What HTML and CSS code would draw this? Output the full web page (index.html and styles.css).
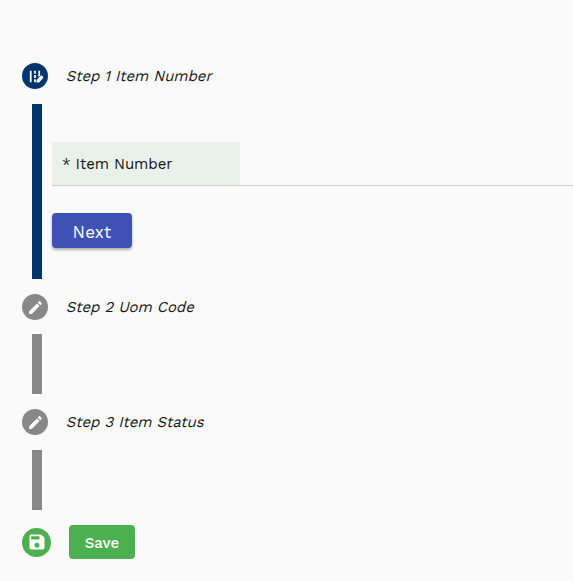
FILE: index.html
```html
<!DOCTYPE html>
<html lang="en">
<head>
<meta charset="utf-8">
<title>Item</title>
<link rel="stylesheet" href="styles.css">
</head>
<body>
<main class="stepper">
  <section class="step">
    <header class="step-head">
      <span class="badge badge-active"><svg viewBox="0 0 24 24"><path d="M4 4h2.500v16H4zM10 4h2.500v4H10zM10 10h2.500v4H10zM10 16h2.500v4H10zM16 4h2.500v6.500L16 13zM22.6 12.300l-1.400-1.400c-.5-.5-1.300-.5-1.800 0L13.500 16.800V20.500h3.700l5.400-6.400c.5-.5.5-1.300 0-1.800z"/></svg></span>
      <span class="title">Step 1 Item Number</span>
    </header>
    <div class="step-body step-body-active">
      <div class="field"><label class="field-label"><span>* Item Number</span></label></div>
      <button class="next"><span>Next</span></button>
    </div>
  </section>
  <section class="step">
    <header class="step-head">
      <span class="badge"><svg viewBox="0 0 24 24"><path d="M3 17.250V21h3.750L17.810 9.940l-3.750-3.750zM20.710 7.040c.39-.39.39-1.020 0-1.410l-2.340-2.340a1 1 0 0 0-1.410 0l-1.830 1.830 3.750 3.750z"/></svg></span>
      <span class="title">Step 2 Uom Code</span>
    </header>
    <div class="step-body"></div>
  </section>
  <section class="step">
    <header class="step-head">
      <span class="badge"><svg viewBox="0 0 24 24"><path d="M3 17.250V21h3.750L17.810 9.940l-3.750-3.750zM20.710 7.040c.39-.39.39-1.020 0-1.410l-2.340-2.340a1 1 0 0 0-1.410 0l-1.830 1.830 3.750 3.750z"/></svg></span>
      <span class="title">Step 3 Item Status</span>
    </header>
    <div class="step-body"></div>
  </section>
  <footer class="actions">
    <span class="badge badge-save"><svg viewBox="0 0 24 24"><path d="M17 3H5a2 2 0 0 0-2 2v14a2 2 0 0 0 2 2h14a2 2 0 0 0 2-2V7zm-5 16a3 3 0 1 1 0-6 3 3 0 0 1 0 6zm3-10H5V5h10z"/></svg></span>
    <button class="save"><span>Save</span></button>
  </footer>
</main>
</body>
</html>
```
FILE: styles.css
```css
* { box-sizing: border-box; }
body {
  margin: 0;
  height: 581px;
  overflow: hidden;
  background: #fafafa;
  color: #151515;
  font-family: "Work Sans", Inter, "Liberation Sans", sans-serif;
}
.stepper { padding: 63px 0 0 22px; }
.step { margin-bottom: 15px; }
.step-head {
  display: flex;
  align-items: center;
  gap: 19px;
  height: 26px;
  margin-bottom: 14.7px;
}
.badge {
  display: flex;
  align-items: center;
  justify-content: center;
  flex: none;
  width: 26px;
  height: 26px;
  border-radius: 50%;
  background: #888;
}
.badge svg { width: 17px; height: 17px; fill: #fff; }
.badge:not(.badge-save) svg { margin: 1px 0 0 1px; }
.badge-active { background: #03356d; }
.badge-save { width: 29px; height: 29px; background: #4caf50; }
.badge-save svg { width: 20px; height: 20px; }
.title {
  font-size: 15px;
  letter-spacing: -0.08px;
  white-space: nowrap;
  transform: skewX(-14deg);
}
.step-body {
  height: 60px;
  margin-left: 10px;
  border-left: 10px solid #888;
}
.step-body-active {
  height: 175px;
  padding: 38px 0 0 10px;
  border-color: #03356d;
}
.field { border-bottom: 1px solid #ccd1ce; }
.field-label {
  display: flex;
  align-items: center;
  width: 188px;
  height: 43px;
  padding: 1px 0 0 10px;
  background: #e9f1ea;
  font-size: 15px;
  letter-spacing: -0.06px;
}
button {
  display: flex;
  align-items: center;
  justify-content: center;
  padding: 0;
  border: 0;
  border-radius: 4px;
  color: #fff;
  font-family: inherit;
}
.next {
  width: 80px;
  height: 35px;
  margin-top: 27.500px;
  background: #3f51b5;
  box-shadow: 0 2px 3px rgba(0, 0, 0, 0.3);
  font-size: 17px;
  letter-spacing: 0.2px;
}
.next span { padding-top: 2px; }
.actions { display: flex; align-items: center; gap: 18px; height: 34px; }
.save {
  width: 66px;
  height: 34px;
  background: #4caf50;
  font-size: 15px;
  font-weight: 500;
}
.save span { padding-top: 1px; }
```
